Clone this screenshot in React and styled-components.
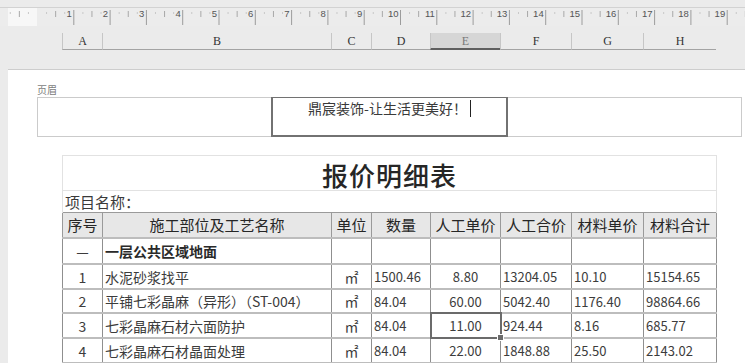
import React from "react";
import styled, { createGlobalStyle } from "styled-components";

const Global = createGlobalStyle`
  html, body { margin: 0; padding: 0; }
  body { background: #ebebeb; font-family: "Noto Sans CJK SC", "Noto Sans", sans-serif; }
`;

const Screen = styled.div`
  width: 745px;
  height: 363px;
  overflow: hidden;
  display: flex;
  flex-direction: column;
  background: #ebebeb;
`;

const TopBar = styled.div`
  height: 69px;
  flex: none;
  display: flex;
  flex-direction: column;
`;

const RulerSvg = styled.svg`
  display: block;
  margin-top: 7px;
  flex: none;
`;

const ColHeaderRow = styled.div`
  margin-top: 7px;
  padding-left: 62px;
  display: flex;
  height: 17px;
`;

const ColHead = styled.div`
  width: ${(p) => p.$w}px;
  box-sizing: border-box;
  border-left: 1px solid #c6c6c6;
  border-bottom: ${(p) => (p.$active ? "2px solid #5f5f5f" : "1px solid #a3a3a3")};
  background: ${(p) => (p.$active ? "#d6d6d6" : "transparent")};
  color: ${(p) => (p.$active ? "#7a7a7a" : "#333")};
  font-family: "Liberation Serif", "DejaVu Serif", serif;
  font-size: 12px;
  line-height: 17px;
  text-align: center;
`;

const Page = styled.div`
  flex: 1;
  margin-left: 8px;
  background: #ffffff;
  border-top: 1px solid #cdcdcd;
  padding: 14px 0 0 29px;
  box-sizing: border-box;
`;

const HeaderLabel = styled.div`
  font-size: 10px;
  line-height: 12px;
  color: #7d7d7d;
  margin-bottom: 1px;
`;

const HeaderBox = styled.div`
  width: 705px;
  height: 40px;
  box-sizing: border-box;
  border: 1px solid #cbcbcb;
  display: grid;
  grid-template-columns: 233px 237px 1fr;
`;

const HeaderEdit = styled.div`
  margin: -1px 0;
  border: 2px solid #727272;
  border-top-width: 1px;
  box-sizing: border-box;
  text-align: center;
  font-size: 14px;
  line-height: 20px;
  color: #3a3a3a;
  white-space: nowrap;
`;

const Caret = styled.span`
  display: inline-block;
  width: 1px;
  height: 17px;
  background: #222;
  vertical-align: -3px;
  margin-left: 3px;
`;

const Sheet = styled.table`
  margin: 18px 0 0 25px;
  border-collapse: collapse;
  table-layout: fixed;
  width: 654px;
`;

const TitleCell = styled.td`
  height: 35px;
  padding: 4px 0 0;
  box-sizing: border-box;
  border: 1px solid #e2e2e2;
  text-align: center;
  font-size: 26px;
  font-weight: 500;
  line-height: 30px;
  color: #262626;
  letter-spacing: 1px;
`;

const ProjectCell = styled.td`
  height: 21px;
  padding: 0 0 0 2px;
  border-left: 1px solid #e2e2e2;
  border-right: 1px solid #e2e2e2;
  font-size: 15px;
  line-height: 20px;
  color: #3a3a3a;
  text-align: left;
`;

const Th = styled.th`
  height: 24px;
  padding: 0;
  background: #e7e7e7;
  border: 1px solid #9a9a9a;
  font-size: 15px;
  font-weight: 400;
  line-height: 22px;
  color: #262626;
  text-align: center;
  white-space: nowrap;
  overflow: hidden;
`;

const Tr = styled.tr`
  height: ${(p) => p.$h}px;
`;

const Td = styled.td`
  position: relative;
  padding: 0 0 0 ${(p) => (p.$align === "center" ? 0 : 2)}px;
  border-left: 1px solid #8f8f8f;
  border-right: 1px solid #8f8f8f;
  border-top: 2px solid #bdbdbd;
  border-bottom: 2px solid #bdbdbd;
  text-align: ${(p) => p.$align || "left"};
  font-size: ${(p) => (p.$num ? 13 : 14)}px;
  font-weight: ${(p) => (p.$bold ? 700 : 400)};
  color: ${(p) => (p.$bold ? "#2a2a2a" : "#3c3c3c")};
  white-space: nowrap;
  overflow: ${(p) => (p.$selected ? "visible" : "hidden")};
  outline: ${(p) => (p.$selected ? "2px solid #6b6b6b" : "none")};
  outline-offset: -1px;
`;

const FillHandle = styled.span`
  position: absolute;
  right: -4px;
  bottom: -4px;
  width: 5px;
  height: 5px;
  background: #6b6b6b;
  border: 1px solid #fff;
`;

const cols = [
  ["A", 40],
  ["B", 229],
  ["C", 40],
  ["D", 59],
  ["E", 70],
  ["F", 71],
  ["G", 72],
  ["H", 73],
];

function Ruler() {
  const ticks = [];
  const base = 37.5;
  const step = 36.3;
  for (let n = -1; n <= 20; n++) {
    const x = base + step * n;
    if (n >= 1 && n <= 19) {
      ticks.push(<line key={"M" + n} x1={x} x2={x} y1={3} y2={18} stroke="#9c9c9c" strokeWidth="1" />);
      ticks.push(
        <text key={"T" + n} x={x - 2} y={10} textAnchor="end" fontSize="9.5" fill="#555" fontFamily="Liberation Sans, sans-serif">
          {n}
        </text>
      );
    }
    const h = x + step / 2;
    ticks.push(<line key={"H" + n} x1={h} x2={h} y1={4} y2={10} stroke="#a8a8a8" strokeWidth="1" />);
    const q1 = x + step / 4;
    const q2 = x + (3 * step) / 4;
    ticks.push(<line key={"Q" + n} x1={q1} x2={q1} y1={5} y2={7} stroke="#c8c8c8" strokeWidth="1" />);
    ticks.push(<line key={"R" + n} x1={q2} x2={q2} y1={5} y2={7} stroke="#c8c8c8" strokeWidth="1" />);
  }
  return (
    <RulerSvg width="745" height="19" viewBox="0 0 745 19">
      <rect x="0" y="0" width="745" height="19" fill="#ececec" />
      <line x1="0" x2="745" y1="0.5" y2="0.5" stroke="#d2d2d2" />
      <rect x="8" y="1" width="29" height="18" fill="#f7f7f7" />
      {ticks}
    </RulerSvg>
  );
}

const rows = [
  { h: 26, section: true, cells: ["—", "一层公共区域地面", "", "", "", "", "", ""] },
  { h: 25, cells: ["1", "水泥砂浆找平", "㎡", "1500.46", "8.80", "13204.05", "10.10", "15154.65"] },
  { h: 24, cells: ["2", "平铺七彩晶麻（异形）（ST-004）", "㎡", "84.04", "60.00", "5042.40", "1176.40", "98864.66"] },
  { h: 25, sel: true, cells: ["3", "七彩晶麻石材六面防护", "㎡", "84.04", "11.00", "924.44", "8.16", "685.77"] },
  { h: 25, cells: ["4", "七彩晶麻石材晶面处理", "㎡", "84.04", "22.00", "1848.88", "25.50", "2143.02"] },
];

const aligns = ["center", "left", "center", "left", "center", "left", "left", "left"];

export default function App() {
  return (
    <>
      <Global />
      <Screen>
        <TopBar>
          <Ruler />
          <ColHeaderRow>
            {cols.map(([c, w]) => (
              <ColHead key={c} $w={w} $active={c === "E"}>
                {c}
              </ColHead>
            ))}
          </ColHeaderRow>
        </TopBar>
        <Page>
          <HeaderLabel>页眉</HeaderLabel>
          <HeaderBox>
            <div />
            <HeaderEdit>
              鼎宸装饰-让生活更美好！<Caret />
            </HeaderEdit>
            <div />
          </HeaderBox>
          <Sheet>
            <colgroup>
              {cols.map(([c, w]) => (
                <col key={c} style={{ width: w }} />
              ))}
            </colgroup>
            <tbody>
              <tr>
                <TitleCell colSpan={8}>报价明细表</TitleCell>
              </tr>
              <tr>
                <ProjectCell colSpan={8}>项目名称：</ProjectCell>
              </tr>
              <tr>
                {["序号", "施工部位及工艺名称", "单位", "数量", "人工单价", "人工合价", "材料单价", "材料合计"].map((t) => (
                  <Th key={t}>{t}</Th>
                ))}
              </tr>
              {rows.map((r, i) => (
                <Tr key={i} $h={r.h}>
                  {r.cells.map((c, j) => (
                    <Td
                      key={j}
                      $align={aligns[j]}
                      $num={j >= 3}
                      $bold={r.section && j === 1}
                      $selected={r.sel && j === 4}
                    >
                      {c}
                      {r.sel && j === 4 && <FillHandle />}
                    </Td>
                  ))}
                </Tr>
              ))}
            </tbody>
          </Sheet>
        </Page>
      </Screen>
    </>
  );
}
